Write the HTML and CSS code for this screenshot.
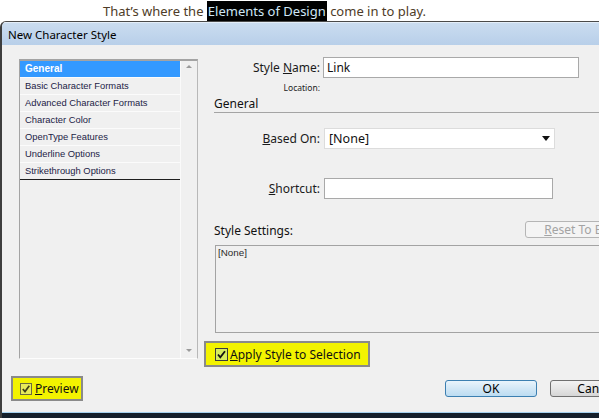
FILE: index.html
```html
<!DOCTYPE html>
<html>
<head>
<meta charset="utf-8">
<title>New Character Style</title>
<link rel="stylesheet" href="styles.css">
</head>
<body>
<p class="intro">That’s where the <span class="hl">Elements of Design</span> come in to play.</p>
<div class="dialog">
  <div class="titlebar">New Character Style</div>
  <div class="content">
    <div class="main">
      <div class="listbox">
        <ul class="list">
          <li class="sel">General</li>
          <li>Basic Character Formats</li>
          <li>Advanced Character Formats</li>
          <li>Character Color</li>
          <li>OpenType Features</li>
          <li>Underline Options</li>
          <li class="last">Strikethrough Options</li>
        </ul>
        <div class="scroll">
          <span class="tri up"></span>
          <span class="tri down"></span>
        </div>
      </div>
      <div class="panel">
        <div class="row r-name">
          <span class="lbl">Style <u>N</u>ame:</span>
          <div class="field name">Link</div>
        </div>
        <div class="loc">Location:</div>
        <div class="heading">General</div>
        <div class="row r-based">
          <span class="lbl"><u>B</u>ased On:</span>
          <div class="field select">[None]
            <svg class="caret" width="8" height="5" viewBox="0 0 8 5"><path d="M0 0H8L4 5Z" fill="#111"/></svg>
          </div>
        </div>
        <div class="row r-short">
          <span class="lbl"><u>S</u>hortcut:</span>
          <div class="field short"></div>
        </div>
        <div class="settings-head">
          <span class="sh-label">Style Settings:</span>
          <span class="reset"><u>R</u>eset To Base</span>
        </div>
        <div class="settings">[None]</div>
        <div class="hilite apply">
          <svg class="cb" width="13" height="13" viewBox="0 0 13 13"><rect x="0.5" y="0.5" width="12" height="12" fill="#d6ec5e" stroke="#3a3a3a"/><path d="M3 6.5 L5.3 9.3 L10 3.2" stroke="#111" stroke-width="1.8" fill="none"/></svg>
          <span class="cb-label"><u>A</u>pply Style to Selection</span>
        </div>
      </div>
    </div>
    <div class="footer">
      <div class="hilite preview">
        <svg class="cb" width="12" height="12" viewBox="0 0 12 12"><rect x="0.5" y="0.5" width="11" height="11" fill="#e6ea5a" stroke="#6a6a40"/><path d="M2.8 6 L5 8.6 L9.3 2.8" stroke="#3e3e18" stroke-width="1.7" fill="none"/></svg>
        <span class="cb-label"><u>P</u>review</span>
      </div>
      <div class="buttons">
        <span class="btn ok">OK</span>
        <span class="btn cancel">Cancel</span>
      </div>
    </div>
  </div>
  <div class="frame-bottom"></div>
</div>
</body>
</html>
```
FILE: styles.css
```css
html, body {
  margin: 0;
  padding: 0;
}
body {
  width: 599px;
  height: 418px;
  overflow: hidden;
  background: #ffffff;
  font-family: "Noto Sans", "Liberation Sans", Arial, sans-serif;
  color: #111;
}
.intro {
  margin: 0;
  height: 21px;
  padding-left: 103px;
  font-size: 13px;
  line-height: 23px;
  color: #4e3c28;
  white-space: nowrap;
}
.hl {
  background: #000;
  color: #cfe6f5;
  padding: 1px;
}
.dialog {
  width: 680px;
  height: 397px;
  box-sizing: border-box;
  border-left: 2px solid #3e3e3e;
  border-top: 1px solid #4a4a4a;
  border-radius: 6px 0 0 0;
  background: #f0f0f0;
  display: flex;
  flex-direction: column;
  overflow: hidden;
}
.titlebar {
  height: 23px;
  flex: none;
  padding-left: 6px;
  font-size: 11.5px;
  line-height: 23px;
  color: #000;
  background: linear-gradient(#cadcf0, #b8cfe9);
  border-top: 1px solid #e4eef9;
  box-sizing: border-box;
}
.content {
  height: 367px;
  flex: none;
  display: flex;
  flex-direction: column;
}
.main {
  display: flex;
  margin-top: 12px;
  padding-left: 17px;
}
.listbox {
  margin-top: 2px;
  width: 179px;
  height: 300px;
  box-sizing: border-box;
  border-top: 2px solid #a3a3a3;
  border-left: 1px solid #a3a3a3;
  border-right: 1px solid #b8b8b8;
  border-bottom: 1px solid #fdfdfd;
  display: flex;
  flex: none;
}
.list {
  list-style: none;
  margin: 0;
  padding: 0;
  width: 160px;
  font-family: "Liberation Sans", Arial, sans-serif;
  font-size: 9.4px;
  color: #1c1c46;
}
.list li {
  height: 17px;
  box-sizing: border-box;
  line-height: 16px;
  padding-left: 5px;
  border-bottom: 1px solid #fbfbfb;
  white-space: nowrap;
}
.list li.sel {
  background: #3399ff;
  color: #fff;
  font-weight: bold;
  font-size: 10px;
}
.list li.last {
  border-bottom: 1px solid #1e1e1e;
}
.scroll {
  flex: 1;
  border-left: 1px solid #fafafa;
  display: flex;
  flex-direction: column;
  justify-content: space-between;
  align-items: center;
  padding: 4px 0 6px;
}
.tri {
  width: 0;
  height: 0;
  border-left: 3px solid transparent;
  border-right: 3px solid transparent;
}
.tri.up {
  border-bottom: 3px solid #9a9a9a;
}
.tri.down {
  border-top: 3px solid #9a9a9a;
}
.panel {
  margin-left: 6px;
  width: 460px;
  flex: none;
  display: flex;
  flex-direction: column;
  font-size: 12px;
}
.row {
  display: flex;
  align-items: center;
  height: 21px;
}
.lbl {
  width: 116px;
  flex: none;
  text-align: right;
  margin-right: 4px;
  white-space: nowrap;
  color: #1a1a1a;
}
.field {
  height: 21px;
  box-sizing: border-box;
  background: #fff;
  border: 1px solid #a9a9a9;
  line-height: 19px;
  padding-left: 3px;
  font-size: 12px;
}
.field.name {
  width: 256px;
  margin-left: -1px;
}
.field.select {
  width: 231px;
  border-color: #dcdcdc;
  padding-left: 4px;
  font-size: 12.5px;
  display: flex;
  align-items: center;
  justify-content: space-between;
  padding-right: 4px;
}
.caret {
  display: block;
}
.field.short {
  width: 229px;
}
.loc {
  margin-top: 5px;
  height: 10px;
  width: 116px;
  text-align: right;
  font-size: 8.5px;
  line-height: 10px;
  color: #222;
}
.heading {
  margin-top: 4px;
  margin-left: 10px;
  line-height: 14px;
  padding-bottom: 1px;
  border-bottom: 1px solid #a4a4a4;
  font-size: 12px;
}
.r-based {
  margin-top: 15px;
}
.r-short {
  margin-top: 29px;
}
.settings-head {
  margin-top: 22px;
  height: 17px;
  display: flex;
  align-items: flex-end;
  padding-left: 10px;
}
.sh-label {
  width: 311px;
  flex: none;
  line-height: 14px;
}
.reset {
  width: 116px;
  height: 17px;
  box-sizing: border-box;
  border: 1px solid #b5b5b5;
  border-radius: 3px;
  background: #f4f4f4;
  color: #a3a3a3;
  line-height: 15px;
  text-align: center;
  font-size: 12px;
}
.settings {
  margin-top: 7px;
  margin-left: 11px;
  height: 88px;
  box-sizing: border-box;
  border: 1px solid #a3a3a3;
  padding: 1px 2px;
  font-family: "Liberation Sans", Arial, sans-serif;
  font-size: 9.8px;
  line-height: 12px;
  color: #2a2a2a;
}
.hilite {
  box-sizing: border-box;
  border: 2px solid #8a8a8a;
  background: #f3f300;
  display: flex;
  align-items: center;
  white-space: nowrap;
}
.apply {
  margin-top: 8px;
  width: 166px;
  height: 26px;
  padding-left: 9px;
  font-size: 12px;
}
.apply .cb-label {
  margin-left: 2px;
}
.cb {
  display: block;
  flex: none;
}
.footer {
  display: flex;
  align-items: flex-start;
  margin-top: 9px;
  padding-left: 9px;
}
.preview {
  width: 72px;
  height: 25px;
  padding-left: 7px;
  font-size: 12px;
}
.preview .cb-label {
  margin-left: 3px;
}
.buttons {
  margin-left: 362px;
  margin-top: 4px;
  display: flex;
  gap: 13px;
}
.btn {
  width: 92px;
  height: 17px;
  box-sizing: border-box;
  border-radius: 3px;
  text-align: center;
  font-size: 12px;
  line-height: 15px;
  color: #000;
}
.btn.ok {
  border: 1px solid #3c7fb1;
  background: linear-gradient(#e9f4fc, #d2e7f6 50%, #bcdcf2);
}
.btn.cancel {
  border: 1px solid #707070;
  background: linear-gradient(#f3f3f3, #e6e6e6 50%, #d6d6d6);
}
.frame-bottom {
  flex: 1;
  border-top: 1px solid #a6d2f0;
  background: #15202c;
}
```
